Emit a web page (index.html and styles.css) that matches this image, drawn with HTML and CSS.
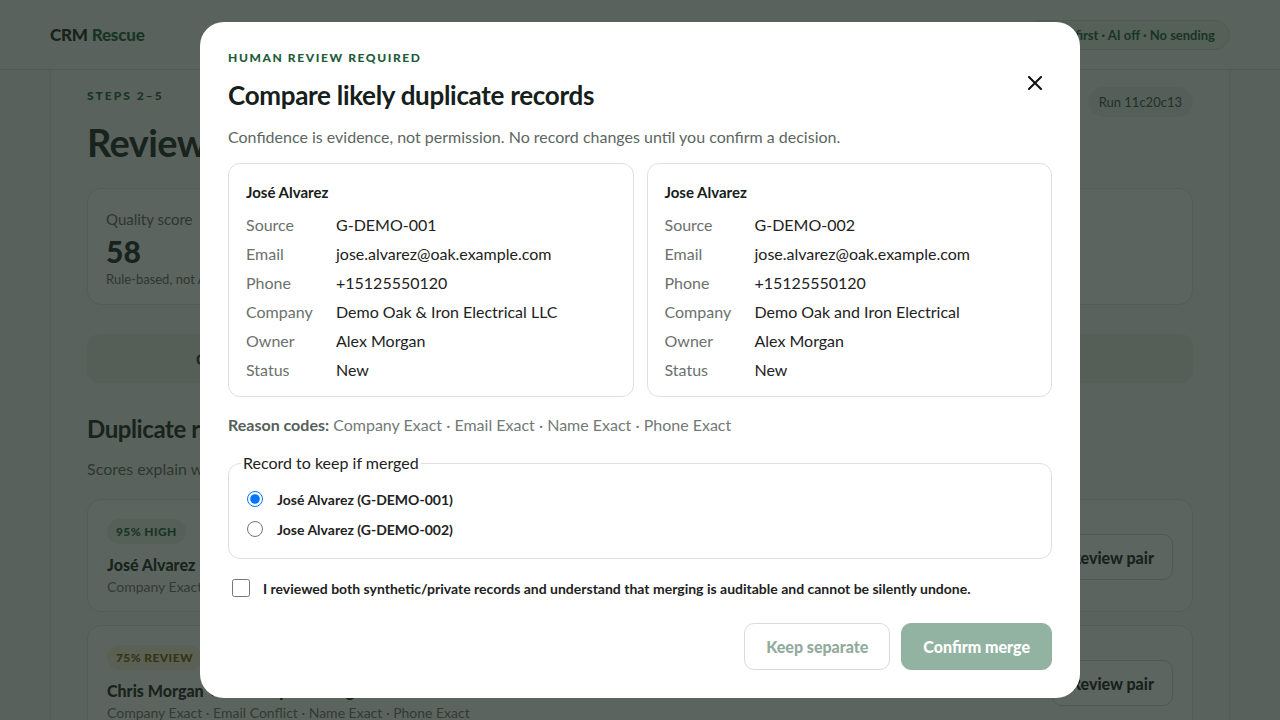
FILE: index.html
```html
<!DOCTYPE html>
<html lang="en">
<head>
    <meta charset="UTF-8">
    <title>CRM Rescue</title>
    <link rel="stylesheet" href="styles.css">
</head>
<body>
    <header class="topbar">
        <div class="brand">CRM <span>Rescue</span></div>
        <div class="mode-pill">Local-first · AI off · No sending</div>
    </header>

    <div class="shell">
        <aside class="side"></aside>

        <main class="main">
            <div class="page-head">
                <div>
                    <div class="eyebrow">Steps 2–5</div>
                    <h1>Review duplicates</h1>
                </div>
                <div class="run-pill">Run 11c20c13</div>
            </div>

            <div class="stats">
                <div class="stat">
                    <div class="stat-label">Quality score</div>
                    <div class="stat-value">58</div>
                    <div class="stat-note">Rule-based, not AI</div>
                </div>
                <div class="stat">
                    <div class="stat-label">Records</div>
                    <div class="stat-value">24</div>
                    <div class="stat-note">Imported</div>
                </div>
                <div class="stat">
                    <div class="stat-label">Pairs</div>
                    <div class="stat-value">3</div>
                    <div class="stat-note">Flagged</div>
                </div>
                <div class="stat">
                    <div class="stat-label">Merged</div>
                    <div class="stat-value">0</div>
                    <div class="stat-note">So far</div>
                </div>
            </div>

            <div class="tabs">
                <div class="tab">Clean up</div>
                <div class="tab">Duplicates</div>
                <div class="tab">Owners</div>
                <div class="tab">Export</div>
            </div>

            <h2 class="section-title">Duplicate review queue</h2>
            <p class="section-sub">Scores explain why records look alike.</p>

            <div class="pair">
                <div>
                    <span class="badge high">95% High</span>
                    <div class="pair-name">José Alvarez ↔ Jose Alvarez</div>
                    <div class="pair-reasons">Company Exact · Email Exact · Name Exact · Phone Exact</div>
                </div>
                <button class="outline-btn">Review pair</button>
            </div>

            <div class="pair">
                <div>
                    <span class="badge review">75% Review</span>
                    <div class="pair-name">Chris Morgan ↔ Christopher Morgan</div>
                    <div class="pair-reasons">Company Exact · Email Conflict · Name Exact · Phone Exact</div>
                </div>
                <button class="outline-btn">Review pair</button>
            </div>
        </main>

        <aside class="side"></aside>
    </div>

    <div class="overlay">
        <div class="modal">
            <div class="modal-eyebrow">Human review required</div>
            <div class="modal-head">
                <h2>Compare likely duplicate records</h2>
                <button class="close-btn" aria-label="Close">
                    <svg width="14" height="14" viewBox="0 0 14 14"><path d="M1 1L13 13M13 1L1 13" stroke="#111" stroke-width="2" stroke-linecap="square"/></svg>
                </button>
            </div>
            <p class="modal-sub">Confidence is evidence, not permission. No record changes until you confirm a decision.</p>

            <div class="compare">
                <div class="record">
                    <div class="record-name">José Alvarez</div>
                    <dl class="fields">
                        <dt>Source</dt><dd>G-DEMO-001</dd>
                        <dt>Email</dt><dd>jose.alvarez@oak.example.com</dd>
                        <dt>Phone</dt><dd>+15125550120</dd>
                        <dt>Company</dt><dd>Demo Oak &amp; Iron Electrical LLC</dd>
                        <dt>Owner</dt><dd>Alex Morgan</dd>
                        <dt>Status</dt><dd>New</dd>
                    </dl>
                </div>
                <div class="record">
                    <div class="record-name">Jose Alvarez</div>
                    <dl class="fields">
                        <dt>Source</dt><dd>G-DEMO-002</dd>
                        <dt>Email</dt><dd>jose.alvarez@oak.example.com</dd>
                        <dt>Phone</dt><dd>+15125550120</dd>
                        <dt>Company</dt><dd>Demo Oak and Iron Electrical</dd>
                        <dt>Owner</dt><dd>Alex Morgan</dd>
                        <dt>Status</dt><dd>New</dd>
                    </dl>
                </div>
            </div>

            <p class="reasons"><strong>Reason codes:</strong> Company Exact · Email Exact · Name Exact · Phone Exact</p>

            <fieldset class="keep">
                <legend>Record to keep if merged</legend>
                <label class="choice"><input type="radio" name="keep" checked> José Alvarez (G-DEMO-001)</label>
                <label class="choice"><input type="radio" name="keep"> Jose Alvarez (G-DEMO-002)</label>
            </fieldset>

            <label class="confirm-check">
                <input type="checkbox">
                I reviewed both synthetic/private records and understand that merging is auditable and cannot be silently undone.
            </label>

            <div class="actions">
                <button class="btn-secondary">Keep separate</button>
                <button class="btn-primary">Confirm merge</button>
            </div>
        </div>
    </div>
</body>
</html>
```

FILE: styles.css
```css
body {
    margin: 0;
    font-family: 'Segoe UI', Lato, 'Open Sans', sans-serif;
    background: #f3f6f3;
    color: #17231c;
    height: 720px;
    overflow: hidden;
}

.topbar {
    height: 69px;
    border-bottom: 1px solid #d6ded8;
    display: flex;
    align-items: center;
    justify-content: space-between;
    padding: 0 50px;
}

.brand {
    font-weight: 900;
    font-size: 17px;
    letter-spacing: -0.2px;
    color: #12201a;
}

.brand span {
    color: #1d5c3a;
}

.mode-pill {
    font-size: 13px;
    font-weight: 700;
    color: #1d5c3a;
    background: #e2eee5;
    border: 1px solid #c9dccf;
    border-radius: 999px;
    padding: 6px 14px;
}

.shell {
    display: grid;
    grid-template-columns: 50px 1fr 50px;
}

.side {
    background: #eef2ef;
    min-height: 660px;
}

.main {
    border-left: 1px solid #dbe2dd;
    border-right: 1px solid #dbe2dd;
    padding: 18px 36px 0;
}

.page-head {
    display: flex;
    justify-content: space-between;
    align-items: flex-start;
}

.eyebrow {
    font-size: 12px;
    font-weight: 900;
    letter-spacing: 2px;
    text-transform: uppercase;
    color: #1d5c3a;
    line-height: 16px;
}

h1 {
    font-size: 38px;
    margin: 14px 0 0;
    line-height: 48px;
    letter-spacing: -0.6px;
}

.run-pill {
    margin-top: -1px;
    font-size: 13px;
    line-height: 18px;
    background: #e4eae6;
    border-radius: 999px;
    padding: 6px 11px;
    color: #3b4a42;
}

.stats {
    margin-top: 22px;
    display: grid;
    grid-template-columns: repeat(4, 1fr);
    gap: 16px;
}

.stat {
    background: #fbfcfb;
    border: 1px solid #dbe3dd;
    border-radius: 14px;
    padding: 20px 18px 0;
    height: 95px;
}

.stat-label {
    font-size: 15px;
    line-height: 20px;
    color: #5d6661;
}

.stat-value {
    font-size: 30px;
    font-weight: 900;
    line-height: 34px;
    margin-top: 5px;
}

.stat-note {
    font-size: 13px;
    color: #5d6661;
    margin-top: 3px;
}

.tabs {
    margin-top: 29px;
    display: grid;
    grid-template-columns: repeat(4, 1fr);
    background: #e3ece5;
    border-radius: 12px;
    height: 49px;
    align-items: center;
    text-align: center;
    font-weight: 700;
    font-size: 15px;
}

h2.section-title {
    font-size: 24px;
    margin: 30px 0 0;
    line-height: 32px;
    letter-spacing: -0.4px;
}

.section-sub {
    margin: 14px 0 21px;
    color: #5d6661;
    font-size: 16px;
}

.pair {
    background: #fbfcfb;
    border: 1px solid #dbe3dd;
    border-radius: 14px;
    padding: 19px 19px 0;
    height: 92px;
    margin-bottom: 13px;
    display: flex;
    justify-content: space-between;
    align-items: center;
}

.pair > div {
    align-self: flex-start;
}

.badge {
    display: inline-block;
    font-size: 12px;
    font-weight: 900;
    text-transform: uppercase;
    letter-spacing: 0.4px;
    border-radius: 999px;
    padding: 5px 9px;
}

.badge.high {
    background: #dfeee3;
    color: #1d5c3a;
}

.badge.review {
    background: #f6efd2;
    color: #7a5a0c;
}

.pair-name {
    margin-top: 11px;
    font-size: 16px;
    font-weight: 900;
}

.pair-reasons {
    font-size: 14px;
    color: #6b736e;
    margin-top: 4px;
}

.outline-btn {
    font: inherit;
    font-weight: 900;
    font-size: 16px;
    background: #fff;
    border: 1px solid #cbd6ce;
    border-radius: 10px;
    padding: 0 18px;
    height: 46px;
    color: #12201a;
    margin-top: -16px;
}

/* modal */
.overlay {
    position: fixed;
    inset: 0;
    background: rgba(24, 36, 29, 0.7);
    display: flex;
    align-items: center;
    justify-content: center;
}

.modal {
    width: 880px;
    height: 676px;
    box-sizing: border-box;
    background: #fff;
    border-radius: 24px;
    padding: 28px 28px;
}

.modal-eyebrow {
    font-size: 12px;
    font-weight: 900;
    letter-spacing: 1.6px;
    text-transform: uppercase;
    color: #1d5c3a;
    line-height: 16px;
}

.modal-head {
    display: flex;
    justify-content: space-between;
    align-items: flex-start;
    margin-top: 13px;
}

.modal-head h2 {
    margin: 0;
    font-size: 26px;
    line-height: 32px;
    letter-spacing: -0.3px;
    color: #16201a;
}

.close-btn {
    border: 0;
    background: none;
    padding: 0;
    width: 32px;
    height: 32px;
    margin-top: -12px;
    margin-right: 1px;
    display: flex;
    align-items: center;
    justify-content: center;
}

.modal-sub {
    margin: 14px 0 0;
    font-size: 16px;
    line-height: 24px;
    color: #5d6661;
}

.compare {
    margin-top: 14px;
    display: grid;
    grid-template-columns: 1fr 1fr;
    gap: 13px;
}

.record {
    border: 1px solid #dedfdf;
    border-radius: 12px;
    padding: 17px 17px 14px;
}

.record-name {
    font-size: 15px;
    font-weight: 700;
    line-height: 22px;
    color: #16201a;
}

.fields {
    margin: 10px 0 0;
    display: grid;
    grid-template-columns: 90px 1fr;
    row-gap: 5px;
    font-size: 16px;
    line-height: 24px;
}

.fields dt {
    color: #6b716d;
}

.fields dd {
    margin: 0;
    color: #222;
}

.reasons {
    margin: 16px 0 0;
    font-size: 16px;
    line-height: 24px;
    color: #737a76;
}

.reasons strong {
    color: #55605a;
}

.keep {
    margin: 14px 0 0;
    border: 1px solid #dedfdf;
    border-radius: 12px;
    padding: 9px 12px 14px;
}

.keep legend {
    font-size: 16px;
    line-height: 24px;
    color: #222;
    padding: 0 2px;
}

.choice {
    display: flex;
    align-items: center;
    height: 30px;
    font-size: 14px;
    font-weight: 700;
    color: #222;
}

.choice input {
    width: 16px;
    height: 16px;
    margin: 0 14px 0 6px;
}

.confirm-check {
    margin-top: 17px;
    display: flex;
    align-items: center;
    font-size: 14px;
    font-weight: 700;
    color: #222;
    height: 24px;
}

.confirm-check input {
    width: 18px;
    height: 18px;
    margin: 0 13px 0 4px;
}

.actions {
    margin-top: 23px;
    display: flex;
    justify-content: flex-end;
    gap: 11px;
}

.actions button {
    font: inherit;
    font-size: 16px;
    font-weight: 900;
    height: 47px;
    border-radius: 10px;
    padding: 0 21px;
}

.btn-secondary {
    background: #fff;
    border: 1px solid #dadcdb;
    color: #93ab9e;
}

.btn-primary {
    background: #93b3a2;
    border: 1px solid #93b3a2;
    color: #fff;
}
```
